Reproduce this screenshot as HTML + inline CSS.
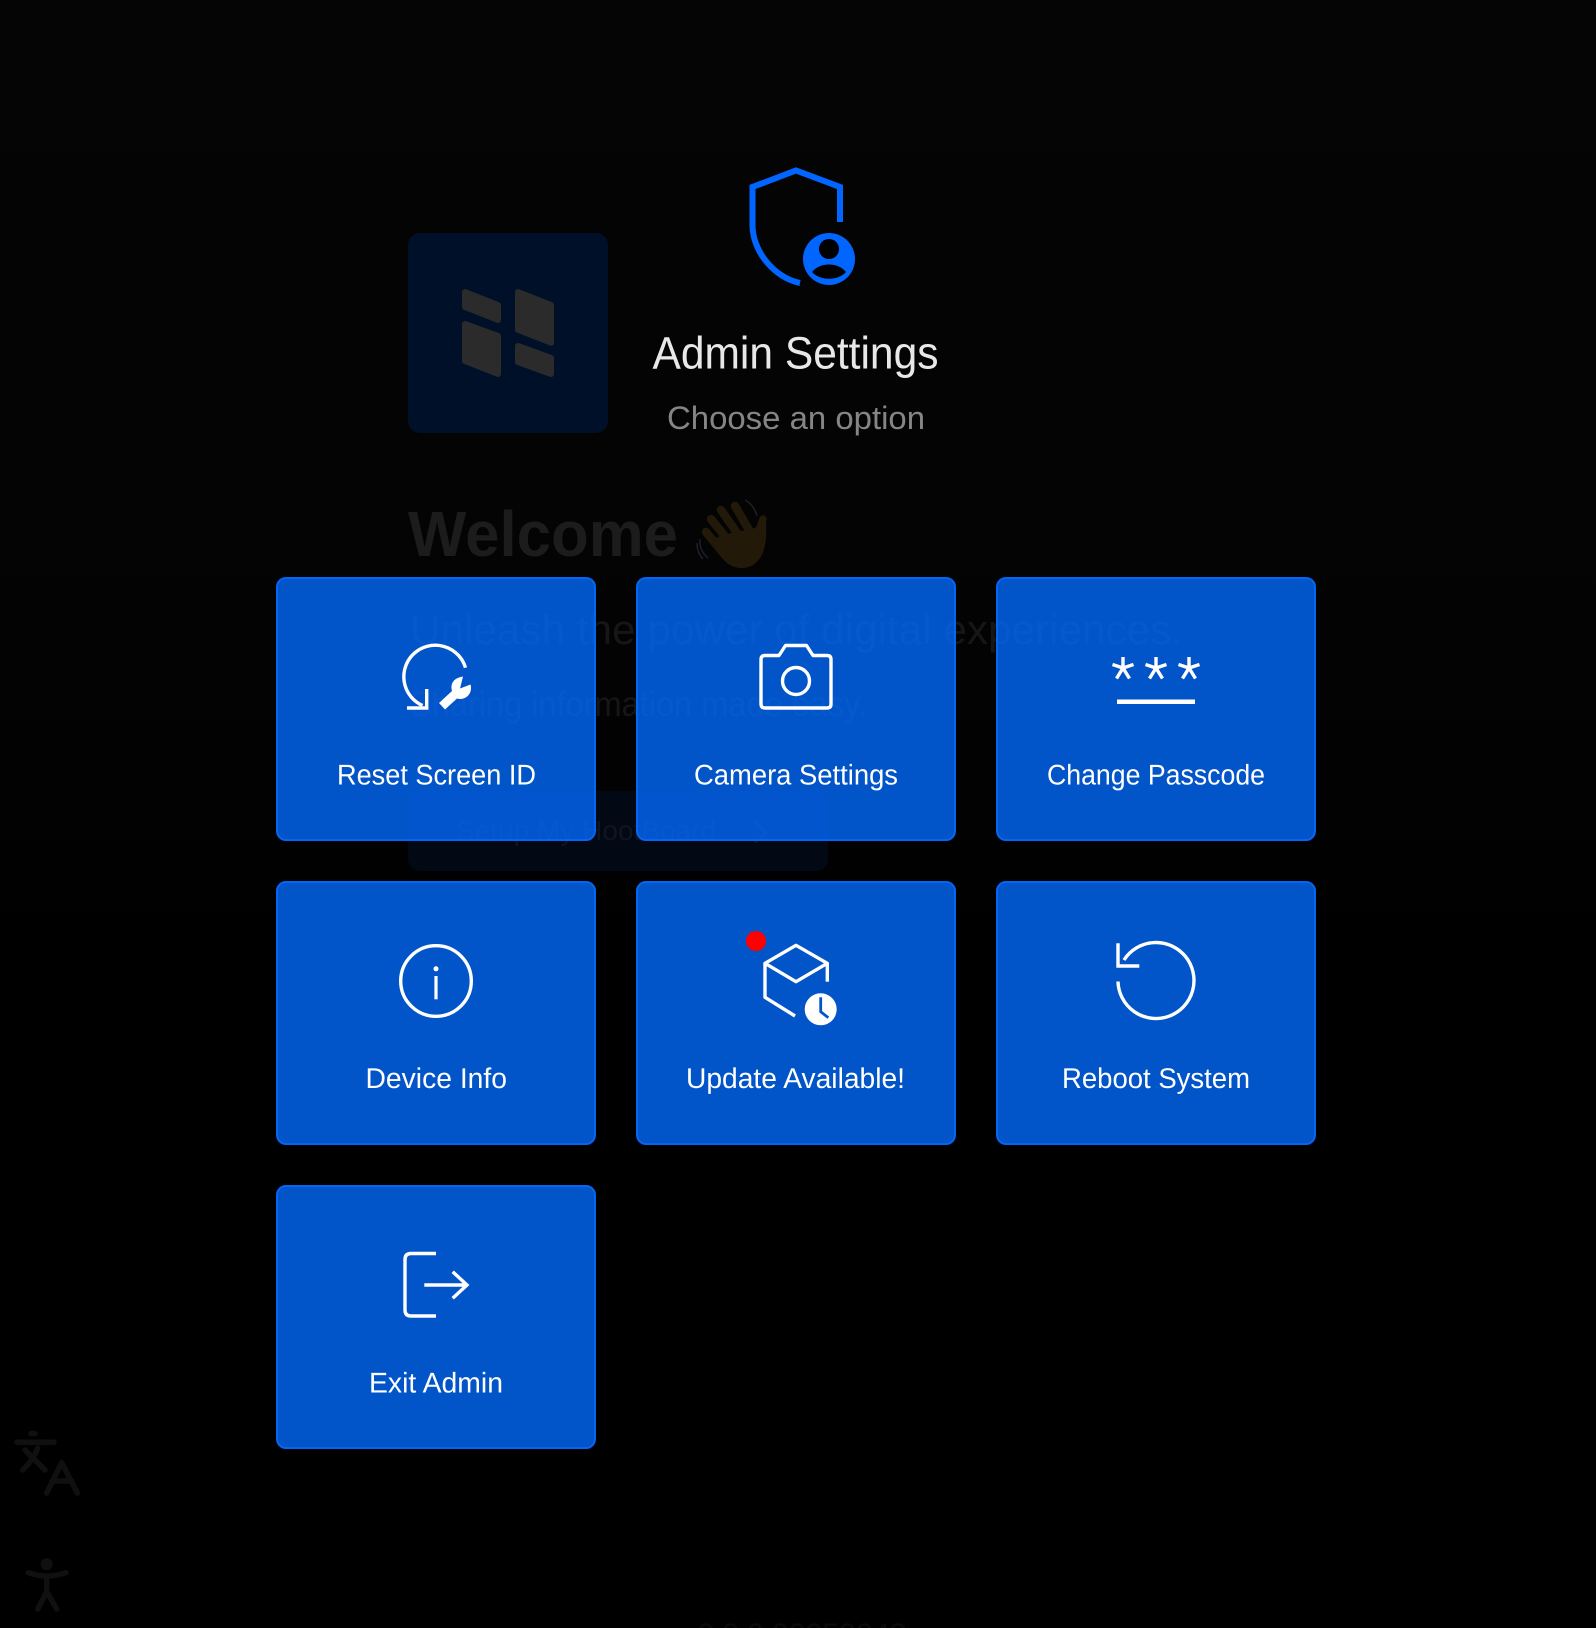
<!DOCTYPE html>
<html lang="en">
<head>
<meta charset="utf-8">
<title>Admin Settings</title>
<style>
html,body{margin:0;padding:0;width:1596px;height:1628px;overflow:hidden;background:#000}
svg{display:block;position:absolute;left:0;top:0}
text{font-family:"Liberation Sans",sans-serif}
.card{fill:rgb(2,105,251);fill-opacity:.8}
.edge{fill:none;stroke:#0566f5;stroke-width:2}
.lb{fill:#fff;font-size:28.5px;text-rendering:geometricPrecision}
.ic{fill:none;stroke:#fff;stroke-width:3.4}
.dim{fill:none;stroke:#101010;stroke-width:5.5;stroke-linecap:round;stroke-linejoin:round}
</style>
</head>
<body>
<svg width="1596" height="1628" viewBox="0 0 1596 1628" xmlns="http://www.w3.org/2000/svg">
<defs>
<linearGradient id="bg" x1="0" y1="0" x2="0" y2="1">
<stop offset="0" stop-color="#050505"/><stop offset=".42" stop-color="#030303"/><stop offset=".6" stop-color="#000"/><stop offset="1" stop-color="#000"/>
</linearGradient>
</defs>
<rect width="1596" height="1628" fill="url(#bg)"/>

<!-- dimmed page behind overlay -->
<rect x="408" y="233" width="200" height="200" rx="12" fill="#001028"/>
<g fill="#2b2b2b" stroke="#2b2b2b" stroke-width="6" stroke-linejoin="round">
<path d="M465 292 L498 305 V320 L465 307Z"/>
<path d="M465 324 L498 336 V374 L465 361Z"/>
<path d="M518 292 L551 305 V342.7 L518 329.7Z"/>
<path d="M518 346 L551 358 V374 L518 362Z"/>
</g>
<text x="408" y="556" font-size="64" font-weight="700" fill="#1c1c1c" textLength="270" lengthAdjust="spacingAndGlyphs">Welcome</text>
<g stroke="#221908" stroke-width="8.5" stroke-linecap="round" fill="none">
<path d="M735 506 L752 535"/><path d="M721 510 L742 540"/><path d="M711 519 L732 545"/><path d="M706 532 L725 555"/><path d="M763 519 L755 542" stroke-width="7.5"/>
</g>
<path d="M722 535 L755 528 L766 520 C767 540 766 556 753 565 C742 571 730 568 722 558 L712 540Z" fill="#221908"/>
<g stroke="#1c2028" stroke-width="1.5" fill="none">
<path d="M745 500 C751 503 755 509 757 516"/><path d="M700 539 C699 546 702 553 708 558"/><path d="M697 543 C697 549 699 555 703 559"/>
</g>
<text x="410" y="644" font-size="42" fill="#161616" textLength="773" lengthAdjust="spacingAndGlyphs">Unleash the power of digital experiences.</text>
<text x="410" y="716" font-size="35" fill="#161616" textLength="457" lengthAdjust="spacingAndGlyphs">Sharing information made easy.</text>
<rect x="408" y="791" width="420" height="80" rx="12" fill="#020814"/>
<text x="456" y="840" font-size="28" fill="#10151f" textLength="260" lengthAdjust="spacingAndGlyphs">Setup My HootBoard</text>
<path d="M755 822 L766 832.5 L755 843" fill="none" stroke="#10151f" stroke-width="2.5"/>

<!-- side icons -->
<g class="dim">
<path d="M31 1433.5 H35"/><path d="M17 1442.3 H54"/><path d="M37.7 1448 C34 1458 28 1465 22.7 1470"/><path d="M25 1450 L45 1470"/>
<path d="M46.7 1493 L61.7 1462.7 L77.3 1493"/><path d="M52 1481 H72"/>
<path d="M28.3 1572.7 C40 1577 53 1577 66 1572.7"/><path d="M46.7 1578 V1591.7 L37.7 1609"/><path d="M46.7 1591.7 L56.7 1609"/>
</g>
<circle cx="46.7" cy="1564.3" r="6" fill="#101010"/>
<text x="697" y="1646" font-size="32" fill="#0a0a0a" textLength="210" lengthAdjust="spacing">0.0.0.00050043</text>

<!-- header -->
<g fill="none" stroke="#0066ff" stroke-width="6">
<path d="M840 222 V187 L796 170.5 L752.5 187 V225 C752.5 252 775 278 800 283"/>
</g>
<circle cx="829" cy="259" r="26" fill="#0066ff"/>
<circle cx="829" cy="249" r="10" fill="#000"/>
<path d="M812 272 C820 262 838 262 846 272 C838 281 820 281 812 272Z" fill="#000"/>
<text x="652.5" y="368.5" font-size="45" fill="#e8e8e8" textLength="286" lengthAdjust="spacingAndGlyphs">Admin Settings</text>
<text x="667" y="429" font-size="32" fill="#858585" textLength="258" lengthAdjust="spacingAndGlyphs">Choose an option</text>

<!-- cards -->
<g>
<rect class="card" x="277" y="578" width="318" height="262" rx="9"/><rect class="edge" x="277" y="578" width="318" height="262" rx="9"/>
<rect class="card" x="637" y="578" width="318" height="262" rx="9"/><rect class="edge" x="637" y="578" width="318" height="262" rx="9"/>
<rect class="card" x="997" y="578" width="318" height="262" rx="9"/><rect class="edge" x="997" y="578" width="318" height="262" rx="9"/>
<rect class="card" x="277" y="882" width="318" height="262" rx="9"/><rect class="edge" x="277" y="882" width="318" height="262" rx="9"/>
<rect class="card" x="637" y="882" width="318" height="262" rx="9"/><rect class="edge" x="637" y="882" width="318" height="262" rx="9"/>
<rect class="card" x="997" y="882" width="318" height="262" rx="9"/><rect class="edge" x="997" y="882" width="318" height="262" rx="9"/>
<rect class="card" x="277" y="1186" width="318" height="262" rx="9"/><rect class="edge" x="277" y="1186" width="318" height="262" rx="9"/>
</g>

<!-- labels -->
<text class="lb" x="337" y="784.5" textLength="199" lengthAdjust="spacingAndGlyphs">Reset Screen ID</text>
<text class="lb" x="694" y="784.5" textLength="204" lengthAdjust="spacingAndGlyphs">Camera Settings</text>
<text class="lb" x="1047" y="784.5" textLength="218" lengthAdjust="spacingAndGlyphs">Change Passcode</text>
<text class="lb" x="365.5" y="1088" textLength="141.5" lengthAdjust="spacingAndGlyphs">Device Info</text>
<text class="lb" x="686" y="1088" textLength="219" lengthAdjust="spacingAndGlyphs">Update Available!</text>
<text class="lb" x="1062" y="1088" textLength="188" lengthAdjust="spacingAndGlyphs">Reboot System</text>
<text class="lb" x="369" y="1392.5" textLength="134" lengthAdjust="spacingAndGlyphs">Exit Admin</text>

<!-- reset icon -->
<path class="ic" stroke-width="3.2" d="M465.5 667.7 A31.5 31.5 0 1 0 422.5 705.5"/>
<path class="ic" stroke-width="3.2" d="M426.7 689 V708 H407"/>
<path fill="#fff" d="M439 703 L452 691 C450 683 454 678 463 676.5 L460 688.5 L470.5 684.5 C473 693 466 701 457 698.5 L445 709.5 Z"/>

<!-- camera icon -->
<path class="ic" stroke-linejoin="round" d="M779 655.5 L785.5 645.5 H806.5 L813 655.5 H827 Q831 655.5 831 659.5 V704 Q831 708 827 708 H765 Q761 708 761 704 V659.5 Q761 655.5 765 655.5 Z"/>
<circle class="ic" cx="796" cy="681" r="13.5"/>

<!-- passcode icon -->
<g class="ic" stroke-width="4.2">
<path d="M1123 657 V668 M1123 668 L1112.5 664.5 M1123 668 L1133.5 664.5 M1123 668 L1116.5 678.5 M1123 668 L1129.5 678.5"/>
<path d="M1156 657 V668 M1156 668 L1145.5 664.5 M1156 668 L1166.5 664.5 M1156 668 L1149.5 678.5 M1156 668 L1162.5 678.5"/>
<path d="M1189 657 V668 M1189 668 L1178.5 664.5 M1189 668 L1199.5 664.5 M1189 668 L1182.5 678.5 M1189 668 L1195.5 678.5"/>
</g>
<rect x="1117" y="699.5" width="78" height="4.5" fill="#fff"/>

<!-- info icon -->
<circle class="ic" cx="436" cy="981" r="35.3"/>
<circle cx="436" cy="968.8" r="2.5" fill="#fff"/>
<rect x="434.4" y="976" width="3.2" height="23.3" fill="#fff"/>

<!-- update icon -->
<circle cx="756" cy="941" r="10" fill="#f00"/>
<g class="ic" stroke-width="3.2" stroke-linejoin="round">
<path d="M796 945.3 L827.3 963.3 L796 981.7 L765 963.3 Z"/>
<path d="M827.3 963.3 V981.7"/>
<path d="M765 963.3 V997.3 L795 1016"/>
</g>
<circle cx="820.7" cy="1009.3" r="16" fill="#fff"/>
<path d="M820.7 997.3 V1011.7 L828.3 1017.7" fill="none" stroke="#0254c9" stroke-width="2.8"/>

<!-- reboot icon -->
<path class="ic" stroke-width="3.8" d="M1118 981.5 A38 38 0 1 0 1124 960"/>
<path class="ic" stroke-width="3.8" d="M1118 943.3 V966 H1139.3"/>

<!-- exit icon -->
<path class="ic" d="M436 1253.5 H411 Q405 1253.5 405 1259.5 V1310 Q405 1316 411 1316 H436"/>
<path class="ic" d="M424.3 1285 H467 M452.7 1271.7 L467 1285 L452.7 1298.3"/>
</svg>
</body>
</html>
